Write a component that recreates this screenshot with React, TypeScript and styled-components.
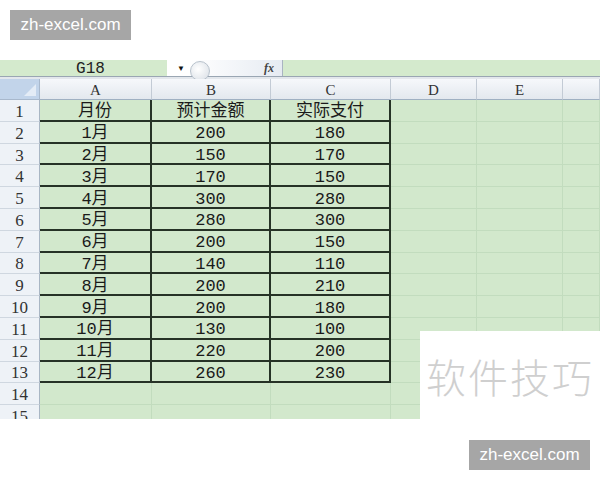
import React from "react";
import styled, { createGlobalStyle } from "styled-components";

const months = [
  ["1月", "200", "180"],
  ["2月", "150", "170"],
  ["3月", "170", "150"],
  ["4月", "300", "280"],
  ["5月", "280", "300"],
  ["6月", "200", "150"],
  ["7月", "140", "110"],
  ["8月", "200", "210"],
  ["9月", "200", "180"],
  ["10月", "130", "100"],
  ["11月", "220", "200"],
  ["12月", "260", "230"],
];

const rows: string[][] = [["月份", "预计金额", "实际支付"], ...months, [], []];
const columns = ["A", "B", "C", "D", "E", ""];

export default function App() {
  return (
    <>
      <GlobalStyle />
      <Page>
        <Badge>zh-excel.com</Badge>
        <Sheet>
          <FormulaBar>
            <NameBox>G18</NameBox>
            <FxBox>
              <Arrow>▼</Arrow>
              <Pill />
              <Fx>fx</Fx>
            </FxBox>
            <FormulaInput />
          </FormulaBar>
          <Divider />
          <Grid>
            <Corner>
              <svg width="12" height="12" viewBox="0 0 12 12">
                <polygon points="12,0 12,12 0,12" fill="#e4ecf6" />
              </svg>
            </Corner>
            {columns.map((c, i) => (
              <ColHeader key={i}>{c}</ColHeader>
            ))}
            {rows.map((r, ri) => (
              <React.Fragment key={ri}>
                <RowHeader>{ri + 1}</RowHeader>
                {columns.map((_, ci) => (
                  <Cell key={ci} $table={ci < 3 && ri < 13}>
                    {r[ci] ?? ""}
                  </Cell>
                ))}
              </React.Fragment>
            ))}
          </Grid>
        </Sheet>
        <Badge $right>zh-excel.com</Badge>
        <Stamp>软件技巧</Stamp>
      </Page>
    </>
  );
}

const GlobalStyle = createGlobalStyle`
  body {
    margin: 0;
    background: #ffffff;
    font-family: "Liberation Sans", "Noto Sans CJK SC", sans-serif;
  }
`;

const Page = styled.div`
  position: relative;
  width: 600px;
  height: 480px;
  overflow: hidden;
  display: flex;
  flex-direction: column;
`;

const Badge = styled.div<{ $right?: boolean }>`
  width: 121px;
  height: 30px;
  margin: ${({ $right }) => ($right ? "21px 10px 0 auto" : "10px 0 0 10px")};
  background: #a6a6a6;
  color: #ffffff;
  font-family: "Liberation Sans", sans-serif;
  font-size: 17px;
  display: flex;
  align-items: center;
  justify-content: center;
  flex-shrink: 0;
`;

const Sheet = styled.div`
  margin-top: 20px;
  height: 359px;
  overflow: hidden;
  background: #d2e8cc;
  flex-shrink: 0;
`;

const FormulaBar = styled.div`
  display: flex;
  height: 16px;
  background: #d4eacd;
`;

const NameBox = styled.div`
  width: 167px;
  display: flex;
  align-items: center;
  justify-content: center;
  font-family: "Liberation Mono", monospace;
  font-size: 16px;
  color: #222;
  padding: 2px 0 0 14px;
  box-sizing: border-box;
`;

const FxBox = styled.div`
  width: 116px;
  display: flex;
  align-items: center;
  background: linear-gradient(to right, #ffffff 0%, #ffffff 20%, #e6ebf2 100%);
  border-right: 1px solid #a9b4c2;
  box-sizing: border-box;
`;

const Arrow = styled.span`
  font-size: 8px;
  color: #111;
  margin-left: 10px;
`;

const Pill = styled.span`
  width: 20px;
  height: 20px;
  margin-left: 5px;
  margin-top: 6px;
  border-radius: 50%;
  border: 1px solid #b8c2cc;
  background: radial-gradient(circle at 40% 40%, #ffffff, #d7dde4);
  box-sizing: border-box;
`;

const Fx = styled.span`
  margin-left: auto;
  margin-right: 8px;
  font-family: "Liberation Serif", serif;
  font-style: italic;
  font-weight: bold;
  font-size: 12px;
  color: #444;
`;

const FormulaInput = styled.div`
  flex: 1;
`;

const Divider = styled.div`
  height: 3px;
  background: #e3e7ec;
  border-top: 1px solid #9aa6b3;
  box-sizing: border-box;
`;

const Grid = styled.div`
  display: grid;
  grid-template-columns: 40px 112px 119px 120px 86px 86px 1fr;
  grid-template-rows: 21px repeat(15, 21.8px);
`;

const Corner = styled.div`
  background: #c2d4ea;
  border-right: 1px solid #a8b8cc;
  border-bottom: 1px solid #a8b8cc;
  display: flex;
  align-items: flex-end;
  justify-content: flex-end;
  padding: 0 3px 3px 0;
  box-sizing: border-box;
`;

const ColHeader = styled.div`
  background: linear-gradient(#f6f8fb, #e3e8ee);
  border-right: 1px solid #c3cbd5;
  border-bottom: 1px solid #9fb0c2;
  font-family: "Liberation Serif", serif;
  font-size: 15px;
  color: #333;
  display: flex;
  align-items: center;
  justify-content: center;
  box-sizing: border-box;
  padding-top: 2px;
`;

const RowHeader = styled.div`
  background: #eef2f7;
  border-right: 1px solid #a9b6c4;
  border-bottom: 1px solid #cfd7e0;
  font-family: "Liberation Serif", serif;
  font-size: 17px;
  color: #333;
  display: flex;
  align-items: center;
  justify-content: center;
  box-sizing: border-box;
  padding-top: 3px;
`;

const Cell = styled.div<{ $table: boolean }>`
  border-right: ${({ $table }) => ($table ? "2px solid #263226" : "1px solid #c2dcbe")};
  border-bottom: ${({ $table }) => ($table ? "2px solid #263226" : "1px solid #c2dcbe")};
  font-family: "Liberation Mono", "Noto Sans CJK SC", monospace;
  font-size: 17px;
  color: #1a1a1a;
  display: flex;
  align-items: center;
  justify-content: center;
  box-sizing: border-box;
  line-height: 1;
  padding-top: 4px;
`;

const Stamp = styled.div`
  position: absolute;
  left: 420px;
  top: 331px;
  width: 180px;
  height: 89px;
  background: #ffffff;
  color: #cfcfcf;
  font-family: "Noto Sans CJK SC", sans-serif;
  font-weight: 300;
  font-size: 40px;
  display: flex;
  align-items: center;
  justify-content: center;
  letter-spacing: 2px;
`;
